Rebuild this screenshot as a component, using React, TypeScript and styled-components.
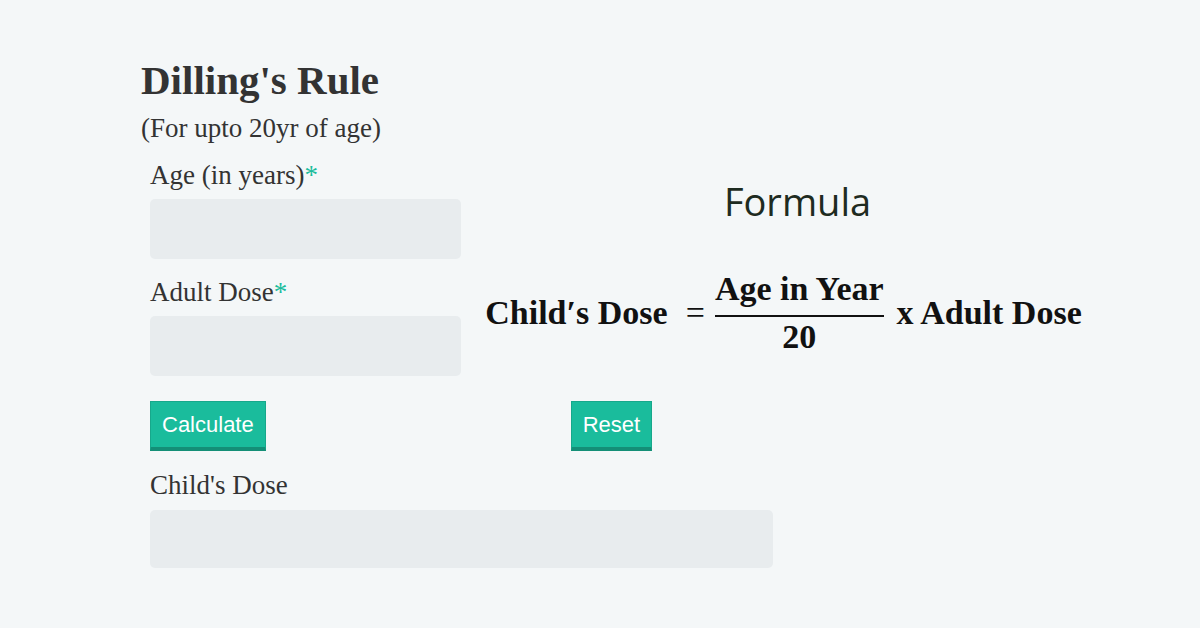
import styled, { createGlobalStyle } from "styled-components";

const GlobalStyle = createGlobalStyle`
  html, body {
    margin: 0;
    padding: 0;
    background-color: #f4f7f8;
  }
`;

const Field = ({ label, required }: { label: string; required?: boolean }) => (
  <FieldGroup>
    <Label>
      {label}
      {required && <Star>*</Star>}
    </Label>
    <Input type="text" />
  </FieldGroup>
);

export default function App() {
  return (
    <>
      <GlobalStyle />
      <Page>
        <Title>Dilling's Rule</Title>
        <Subtitle>(For upto 20yr of age)</Subtitle>
        <Form>
          <TopRow>
            <Fields>
              <Field label="Age (in years)" required />
              <Field label="Adult Dose" required />
            </Fields>
            <FormulaPanel>
              <FormulaHeading>Formula</FormulaHeading>
              <Equation>
                <Term>Child′s Dose</Term>
                <Equals>=</Equals>
                <Fraction>
                  <Numerator>Age in Year</Numerator>
                  <Denominator>20</Denominator>
                </Fraction>
                <Term>x Adult Dose</Term>
              </Equation>
            </FormulaPanel>
          </TopRow>
          <ButtonRow>
            <Button type="button">Calculate</Button>
            <Button type="button" $offset={305}>
              Reset
            </Button>
          </ButtonRow>
          <ResultGroup>
            <Label>Child's Dose</Label>
            <Input type="text" readOnly $wide />
          </ResultGroup>
        </Form>
      </Page>
    </>
  );
}

const Page = styled.div`
  min-height: 628px;
  box-sizing: border-box;
  padding: 58px 0 0 141px;
  font-family: "Liberation Serif", "Times New Roman", serif;
  color: #333;
`;

const Title = styled.h1`
  margin: 0;
  font-size: 41px;
  font-weight: 700;
  line-height: 44px;
  color: #333;
`;

const Subtitle = styled.p`
  margin: 11px 0 0;
  font-size: 27px;
  line-height: 30px;
`;

const Form = styled.form`
  padding-left: 9px;
`;

const TopRow = styled.div`
  display: flex;
`;

const Fields = styled.div`
  width: 311px;
  display: flex;
  flex-direction: column;
`;

const FieldGroup = styled.div`
  margin-top: 18px;

  &:first-child {
    margin-top: 17px;
  }
`;

const Label = styled.label`
  display: block;
  font-size: 27px;
  line-height: 30px;
  color: #333;
`;

const Star = styled.span`
  color: #1abc9c;
`;

const Input = styled.input<{ $wide?: boolean }>`
  display: block;
  box-sizing: border-box;
  width: ${(p) => (p.$wide ? "623px" : "311px")};
  height: ${(p) => (p.$wide ? "58px" : "60px")};
  margin-top: 9px;
  border: none;
  border-radius: 5px;
  background-color: #e8ecee;
  font-size: 20px;
  padding: 0 12px;

  &:focus {
    outline: none;
  }
`;

const FormulaPanel = styled.div`
  width: 659px;
  display: flex;
  flex-direction: column;
  align-items: center;
  padding-top: 32px;
`;

const FormulaHeading = styled.div`
  margin-left: 14px;
  font-family: "Open Sans", "Noto Sans", sans-serif;
  font-size: 38px;
  line-height: 52px;
  color: #1e2b21;
`;

const Equation = styled.div`
  display: flex;
  align-items: center;
  margin-top: 44px;
  margin-right: 14px;
  font-family: "Liberation Serif", serif;
  font-weight: 700;
  font-size: 34px;
  color: #111;
  white-space: nowrap;
`;

const Term = styled.span`
  line-height: 36px;
`;

const Equals = styled.span`
  margin: 0 10px 0 18px;
  font-weight: 400;
  line-height: 36px;
`;

const Fraction = styled.span`
  display: flex;
  flex-direction: column;
  align-items: center;
  margin-right: 13px;
`;

const Numerator = styled.span`
  line-height: 36px;
  padding: 0 0 8px;
  border-bottom: 2px solid #111;
`;

const Denominator = styled.span`
  line-height: 36px;
  margin-top: 2px;
`;

const ButtonRow = styled.div`
  display: flex;
  margin-top: 25px;
`;

const Button = styled.button<{ $offset?: number }>`
  margin-left: ${(p) => (p.$offset ? `${p.$offset}px` : "0")};
  height: 50px;
  padding: 0 11px;
  box-sizing: border-box;
  background-color: #1abc9c;
  color: #fff;
  border: 1px solid #17a88b;
  border-bottom: 4px solid #148f77;
  font-family: "Liberation Sans", Arial, sans-serif;
  font-size: 22px;
  cursor: pointer;
`;

const ResultGroup = styled.div`
  margin-top: 19px;

  & input {
    margin-top: 10px;
  }
`;
